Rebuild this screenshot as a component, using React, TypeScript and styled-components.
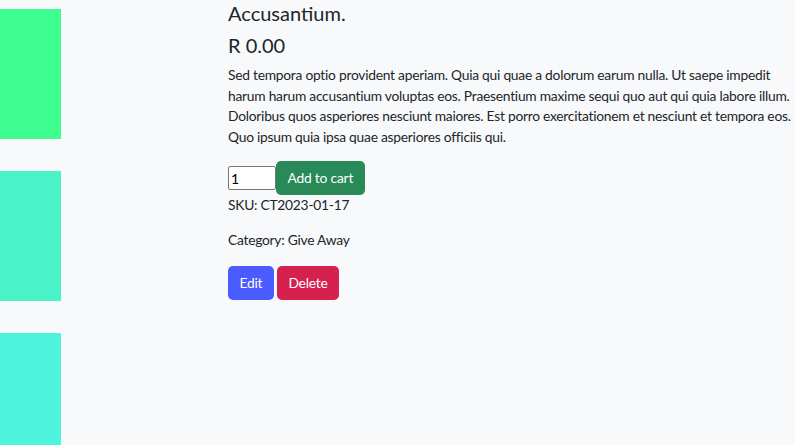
import { FC } from "react";
import styled, { createGlobalStyle } from "styled-components";

const GlobalStyle = createGlobalStyle`
  html, body {
    margin: 0;
    padding: 0;
    background: #f8f9fa;
    overflow: hidden;
  }
  body {
    font-family: Lato, "Noto Sans", sans-serif;
    font-size: 13.8px;
    letter-spacing: -0.25px;
    line-height: 20.6px;
    color: #212529;
  }
`;

const Page = styled.div`
  display: flex;
  align-items: flex-start;
  width: 795px;
  height: 445px;
  overflow: hidden;
`;

const Gallery = styled.div`
  display: flex;
  flex-direction: column;
  gap: 32px;
  width: 61px;
  padding-top: 9px;
  flex-shrink: 0;
`;

const Thumb = styled.div<{ $color: string }>`
  width: 61px;
  height: 130px;
  background: ${(p) => p.$color};
`;

const Details = styled.div`
  margin-left: 167px;
  width: 567px;
  flex-shrink: 0;
`;

const Title = styled.h3`
  margin: 0;
  font-size: 20px;
  font-weight: 400;
  letter-spacing: 0;
  line-height: 26px;
`;

const Price = styled.h4`
  margin: 6px 0 7px;
  font-size: 20px;
  font-weight: 400;
  letter-spacing: 0;
  line-height: 26px;
`;

const Description = styled.p`
  margin: 0 0 14px;
`;

const CartForm = styled.form`
  display: flex;
  align-items: center;
`;

const Qty = styled.input`
  box-sizing: border-box;
  width: 48px;
  height: 24px;
  padding: 1px 2px;
  border: 1px solid #767676;
  border-radius: 2px;
  background: #fff;
  font-family: inherit;
  font-size: 14px;
  color: #000;
`;

const Button = styled.button<{ $bg: string }>`
  box-sizing: border-box;
  height: 34px;
  padding: 0 11.5px;
  border: none;
  border-radius: 5px;
  background: ${(p) => p.$bg};
  color: #fff;
  font-family: inherit;
  font-size: 13.8px;
  letter-spacing: -0.2px;
  line-height: 34px;
  cursor: pointer;
`;

const Meta = styled.p<{ $gap: number }>`
  margin: 0 0 ${(p) => p.$gap}px;
`;

const Actions = styled.div`
  display: flex;
  gap: 3px;
`;

const thumbs = ["#3dfe8f", "#4af3c8", "#4ef3dc"];

const App: FC = () => {
  return (
    <>
      <GlobalStyle />
      <Page>
        <Gallery>
          {thumbs.map((c) => (
            <Thumb key={c} $color={c} />
          ))}
        </Gallery>
        <Details>
          <Title>Accusantium.</Title>
          <Price>R 0.00</Price>
          <Description>
            Sed tempora optio provident aperiam. Quia qui quae a dolorum earum nulla. Ut saepe
            impedit harum harum accusantium voluptas eos. Praesentium maxime sequi quo aut qui
            quia labore illum. Doloribus quos asperiores nesciunt maiores. Est porro
            exercitationem et nesciunt et tempora eos. Quo ipsum quia ipsa quae asperiores
            officiis qui.
          </Description>
          <CartForm onSubmit={(e) => e.preventDefault()}>
            <Qty type="text" defaultValue="1" />
            <Button type="submit" $bg="#288a56">
              Add to cart
            </Button>
          </CartForm>
          <Meta $gap={14}>SKU: CT2023-01-17</Meta>
          <Meta $gap={15}>Category: Give Away</Meta>
          <Actions>
            <Button $bg="#4a5cff">Edit</Button>
            <Button $bg="#d6204e">Delete</Button>
          </Actions>
        </Details>
      </Page>
    </>
  );
};

export default App;
